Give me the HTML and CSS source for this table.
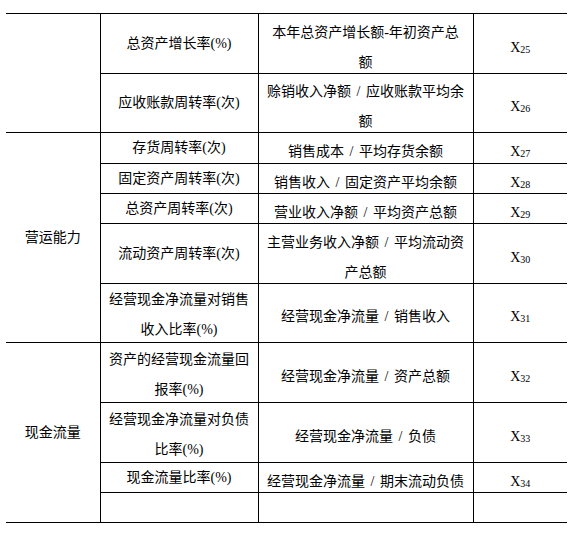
FILE: index.html
```html
<!DOCTYPE html>
<html lang="zh">
<head>
<meta charset="utf-8">
<title>财务指标</title>
<link rel="stylesheet" href="styles.css">
</head>
<body>
<table class="tbl">
  <colgroup>
    <col class="w1"><col class="w2"><col class="w3"><col class="w4">
  </colgroup>
  <tr class="h60">
    <td class="c1" rowspan="2"></td>
    <td class="c2"><div class="t">总资产增长率(%)</div></td>
    <td class="c3"><div class="t2">本年总资产增长额-年初资产总<br>额</div></td>
    <td class="c4"><div class="x">X<sub>25</sub></div></td>
  </tr>
  <tr class="h59">
    <td class="c2"><div class="t">应收账款周转率(次)</div></td>
    <td class="c3"><div class="t2">赊销收入净额<span class="sl"> / </span>应收账款平均余<br>额</div></td>
    <td class="c4"><div class="x">X<sub>26</sub></div></td>
  </tr>
  <tr class="h31">
    <td class="c1" rowspan="5"><div class="g">营运能力</div></td>
    <td class="c2"><div class="t">存货周转率(次)</div></td>
    <td class="c3"><div class="t">销售成本<span class="sl"> / </span>平均存货余额</div></td>
    <td class="c4"><div class="x">X<sub>27</sub></div></td>
  </tr>
  <tr class="h30">
    <td class="c2"><div class="t">固定资产周转率(次)</div></td>
    <td class="c3"><div class="t">销售收入<span class="sl"> / </span>固定资产平均余额</div></td>
    <td class="c4"><div class="x">X<sub>28</sub></div></td>
  </tr>
  <tr class="h30">
    <td class="c2"><div class="t">总资产周转率(次)</div></td>
    <td class="c3"><div class="t">营业收入净额<span class="sl"> / </span>平均资产总额</div></td>
    <td class="c4"><div class="x">X<sub>29</sub></div></td>
  </tr>
  <tr class="h60">
    <td class="c2"><div class="t">流动资产周转率(次)</div></td>
    <td class="c3"><div class="t2">主营业务收入净额<span class="sl"> / </span>平均流动资<br>产总额</div></td>
    <td class="c4"><div class="x">X<sub>30</sub></div></td>
  </tr>
  <tr class="h59">
    <td class="c2"><div class="t2">经营现金净流量对销售<br>收入比率(%)</div></td>
    <td class="c3"><div class="t">经营现金净流量<span class="sl"> / </span>销售收入</div></td>
    <td class="c4"><div class="x">X<sub>31</sub></div></td>
  </tr>
  <tr class="h60">
    <td class="c1" rowspan="4"><div class="g">现金流量</div></td>
    <td class="c2"><div class="t2">资产的经营现金流量回<br>报率(%)</div></td>
    <td class="c3"><div class="t">经营现金净流量<span class="sl"> / </span>资产总额</div></td>
    <td class="c4"><div class="x">X<sub>32</sub></div></td>
  </tr>
  <tr class="h60">
    <td class="c2"><div class="t2">经营现金净流量对负债<br>比率(%)</div></td>
    <td class="c3"><div class="t">经营现金净流量<span class="sl"> / </span>负债</div></td>
    <td class="c4"><div class="x">X<sub>33</sub></div></td>
  </tr>
  <tr class="h30">
    <td class="c2"><div class="t">现金流量比率(%)</div></td>
    <td class="c3"><div class="t">经营现金净流量<span class="sl"> / </span>期末流动负债</div></td>
    <td class="c4"><div class="x">X<sub>34</sub></div></td>
  </tr>
  <tr class="h30">
    <td class="c2"></td>
    <td class="c3"></td>
    <td class="c4"></td>
  </tr>
</table>
</body>
</html>
```
FILE: styles.css
```css
html, body {
  margin: 0;
  padding: 0;
  background: #ffffff;
}

body {
  font-family: "Liberation Serif", "Noto Sans CJK SC", serif;
  font-size: 14px;
  color: #000000;
}

.tbl {
  margin: 13px 0 0 6px;
  width: 561px;
  border-collapse: collapse;
  table-layout: fixed;
}

.w1 { width: 94px; }
.w2 { width: 158px; }
.w3 { width: 215px; }
.w4 { width: 94px; }

.h60 { height: 60px; }
.h59 { height: 59px; }
.h31 { height: 31px; }
.h30 { height: 30px; }

.tbl td {
  border: 1px solid #000000;
  padding: 0 4px;
  text-align: center;
  vertical-align: middle;
}

.tbl td.c1 {
  border-left: none;
}

.tbl td.c4 {
  border-right: none;
}

.t {
  line-height: 20px;
  white-space: nowrap;
}

.c3 .t,
.c4 .x {
  margin: 4px 0 -4px;
}

.t2 {
  line-height: 30px;
  white-space: nowrap;
}

.c3 .t2 {
  margin: 3px 0 -5px;
}

.c2 .t2 {
  margin: 1px 0 -3px;
}

.sl {
  padding: 0 2px;
}

.g {
  line-height: 20px;
}

.x {
  font-family: "Liberation Serif", serif;
  font-size: 14px;
  line-height: 20px;
}

.x sub {
  font-size: 10px;
  vertical-align: -1px;
  line-height: 0;
}
```
